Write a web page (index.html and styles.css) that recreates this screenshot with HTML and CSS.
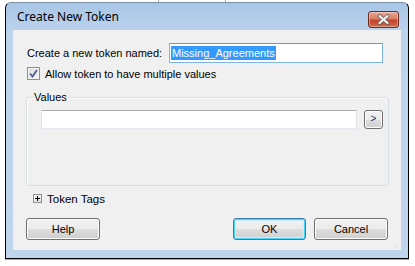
FILE: index.html
```html
<!DOCTYPE html>
<html>
<head>
  <title>Create New Token</title>
  <link rel="stylesheet" href="styles.css">
</head>
<body>
  <div class="window">
    <div class="titlebar">
      <span class="title">Create New Token</span>
      <span class="close-btn">
        <svg width="15" height="11" viewBox="0 0 15 11">
          <path d="M3.5 2 L11.5 9 M11.5 2 L3.5 9" stroke="#6a5a58" stroke-width="3.6" stroke-linecap="round"/>
          <path d="M3.5 2 L11.5 9 M11.5 2 L3.5 9" stroke="#ffffff" stroke-width="2" stroke-linecap="round"/>
        </svg>
      </span>
    </div>

    <div class="client">
      <div class="name-row">
        <label class="name-label">Create a new token named:</label>
        <div class="textbox name-box"><span class="selected">Missing_Agreements</span></div>
      </div>

      <div class="check-row">
        <span class="checkbox">
          <svg width="9" height="9" viewBox="0 0 9 9">
            <path d="M1 4.5 L3.5 7.5 L8 1" fill="none" stroke="#4a5f97" stroke-width="1.8"/>
          </svg>
        </span>
        <span class="check-label">Allow token to have multiple values</span>
      </div>

      <fieldset class="group">
        <legend>Values</legend>
        <div class="values-row">
          <div class="textbox values-box"></div>
          <span class="small-btn">&gt;</span>
        </div>
      </fieldset>

      <div class="tags-row">
        <span class="expander"></span>
        <span class="tags-label">Token Tags</span>
      </div>

      <div class="button-row">
        <span class="btn">Help</span>
        <span class="spacer"></span>
        <span class="btn btn-default">OK</span>
        <span class="btn">Cancel</span>
      </div>

      <span class="grip"></span>
    </div>
  </div>
</body>
</html>
```

FILE: styles.css
```css
html, body {
  margin: 0;
  height: 100%;
}

body {
  background-color: #ffffff;
  background-image:
    linear-gradient(#b0b0b0, #b0b0b0),
    linear-gradient(#b0b0b0, #b0b0b0);
  background-size: 1px 2px, 1px 2px;
  background-position: 158px 0, 225px 0;
  background-repeat: no-repeat;
  padding: 2px 0 0 5px;
  font-family: "Liberation Sans", Arial, sans-serif;
  font-size: 11px;
  color: #000000;
}

/* Window frame */
.window {
  border: 1px solid #000000;
  border-top-color: #7d8fa3;
  border-radius: 6px 6px 0 0;
  background: linear-gradient(#a9c6e6, #bcd3ec 30px, #c0d5ec);
  padding: 0 7px 8px 7px;
  box-sizing: content-box;
  width: 388px;
  height: 247px;
  box-shadow: 0 1px 0 #56c8ee;
  display: flex;
  flex-direction: column;
}

.titlebar {
  height: 27px;
  display: flex;
  align-items: flex-start;
}

.title {
  font-family: "Noto Sans", "Open Sans", sans-serif;
  font-size: 12px;
  color: #000000;
  padding: 6px 0 0 4px;
  line-height: 16px;
}

.close-btn {
  margin-left: auto;
  margin-top: 8px;
  margin-right: 2px;
  width: 29px;
  height: 15px;
  border: 1px solid #6e2a1f;
  border-radius: 3px;
  background: linear-gradient(#e9a797, #d97e66 45%, #c2442a 55%, #cf6a4d);
  box-shadow: inset 0 0 0 1px rgba(255, 255, 255, 0.35);
  display: flex;
  align-items: center;
  justify-content: center;
}

/* Client area */
.client {
  position: relative;
  height: 220px;
  background-color: #f0f0f0;
  padding: 0 13px;
  display: flex;
  flex-direction: column;
}

.name-row {
  margin-top: 13px;
  height: 20px;
  display: flex;
  align-items: center;
}

.name-label {
  width: 143px;
  padding-left: 1px;
  box-sizing: border-box;
}

.textbox {
  box-sizing: border-box;
  background-color: #ffffff;
  border: 1px solid #dbe2ea;
  border-top-color: #abadb3;
  border-left-color: #e2e3ea;
  border-right-color: #e2e3ea;
  border-bottom-color: #e3e9ef;
}

.name-box {
  width: 214px;
  height: 20px;
  padding: 2px 0 0 1px;
  border-color: #7eb4ea;
  border-top-color: #569de5;
}

.selected {
  display: inline-block;
  background-color: #3399ff;
  color: #ffffff;
  line-height: 14px;
  padding: 0 1px;
}

.check-row {
  margin-top: 4px;
  height: 13px;
  display: flex;
  align-items: center;
  padding-left: 1px;
}

.checkbox {
  width: 13px;
  height: 13px;
  box-sizing: border-box;
  border: 1px solid #8e8f8f;
  background: linear-gradient(135deg, #dcdcdc, #f8f8f8);
  box-shadow: inset 0 0 0 1px #f4f4f4;
  display: flex;
  align-items: center;
  justify-content: center;
}

.check-label {
  margin-left: 5px;
}

/* Group box */
.group {
  margin: 11px 0 0 0;
  padding: 6px 5px 56px 14px;
  border: 1px solid #d5dfe5;
  border-radius: 3px;
  box-shadow: inset 1px 1px 0 #ffffff;
  width: 363px;
  box-sizing: border-box;
  min-width: 0;
}

.group legend {
  padding: 0 1px;
  margin-left: -8px;
  line-height: 13px;
}

.values-row {
  display: flex;
  align-items: center;
}

.values-box {
  width: 316px;
  height: 19px;
}

.small-btn {
  margin-left: 7px;
  width: 19px;
  height: 19px;
  box-sizing: border-box;
  border: 1px solid #707070;
  border-radius: 3px;
  background: linear-gradient(#f2f2f2, #ebebeb 50%, #dddddd 51%, #cfcfcf);
  box-shadow: inset 0 0 0 1px #fcfcfc;
  font-size: 10px;
  line-height: 16px;
  text-align: center;
  color: #1a2a6a;
}

/* Token tags */
.tags-row {
  margin-top: 6px;
  height: 13px;
  display: flex;
  align-items: center;
  padding-left: 7px;
}

.expander {
  position: relative;
  width: 9px;
  height: 9px;
  box-sizing: border-box;
  border: 1px solid #919191;
  background: linear-gradient(135deg, #ffffff, #d8d8d8);
}

.expander::before,
.expander::after {
  content: "";
  position: absolute;
  background-color: #000000;
}

.expander::before {
  left: 1px;
  top: 3px;
  width: 5px;
  height: 1px;
}

.expander::after {
  left: 3px;
  top: 1px;
  width: 1px;
  height: 5px;
}

.tags-label {
  margin-left: 5px;
  font-size: 11.5px;
}

/* Buttons */
.button-row {
  margin-top: 13px;
  display: flex;
  gap: 8px;
}

.spacer {
  flex: 1;
}

.btn {
  width: 74px;
  height: 22px;
  box-sizing: border-box;
  border: 1px solid #707070;
  border-radius: 3px;
  background: linear-gradient(#f2f2f2, #ebebeb 50%, #dddddd 51%, #cfcfcf);
  box-shadow: inset 0 0 0 1px #fcfcfc;
  display: flex;
  align-items: center;
  justify-content: center;
  font-size: 11px;
}

.btn-default {
  width: 73px;
  border-color: #3c7fb1;
  box-shadow: inset 0 0 0 1px #48d2f8, inset 0 0 0 2px #c9efff;
}

.grip {
  position: absolute;
  right: 2px;
  bottom: 1px;
  width: 7px;
  height: 7px;
  background-image: radial-gradient(circle, #b8b8b8 0.7px, transparent 0.8px);
  background-size: 3px 3px;
  clip-path: polygon(100% 0, 100% 100%, 0 100%);
}
```
